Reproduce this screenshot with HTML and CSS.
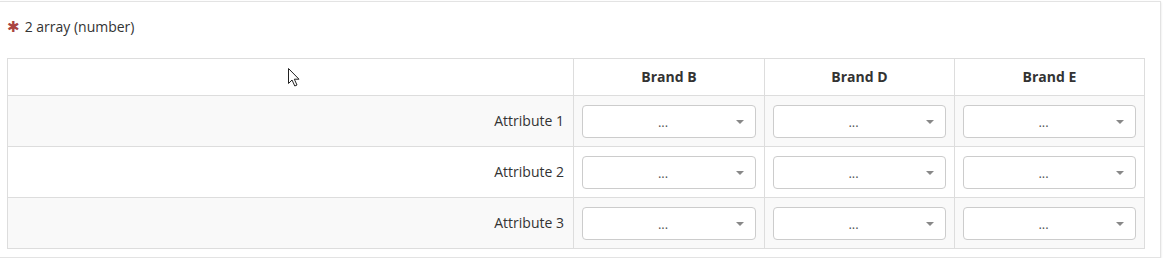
FILE: index.html
```html
<!DOCTYPE html>
<html>
<head>
<meta charset="utf-8">
<link rel="stylesheet" href="styles.css">
</head>
<body>
<div class="card">
  <div class="question"><span class="req">✱</span> 2 array (number)</div>
  <table class="grid">
    <colgroup><col class="c0"><col class="c1"><col class="c2"><col class="c2"></colgroup>
    <thead>
      <tr><th></th><th>Brand B</th><th>Brand D</th><th>Brand E</th></tr>
    </thead>
    <tbody>
      <tr class="odd"><td class="attr">Attribute 1</td>
        <td><div class="sel"><span>...</span><i class="caret"></i></div></td>
        <td><div class="sel"><span>...</span><i class="caret"></i></div></td>
        <td><div class="sel"><span>...</span><i class="caret"></i></div></td></tr>
      <tr><td class="attr">Attribute 2</td>
        <td><div class="sel"><span>...</span><i class="caret"></i></div></td>
        <td><div class="sel"><span>...</span><i class="caret"></i></div></td>
        <td><div class="sel"><span>...</span><i class="caret"></i></div></td></tr>
      <tr class="odd"><td class="attr">Attribute 3</td>
        <td><div class="sel"><span>...</span><i class="caret"></i></div></td>
        <td><div class="sel"><span>...</span><i class="caret"></i></div></td>
        <td><div class="sel"><span>...</span><i class="caret"></i></div></td></tr>
    </tbody>
  </table>
  <svg class="cursor" width="14" height="20" viewBox="0 0 14 20"><path d="M0.5 0.5 L0.5 15.5 L4 12 L6.8 18 L9 17 L6.3 11.2 L11 11.2 Z" fill="#fff" stroke="#222" stroke-width="1"/></svg>
</div>
</body>
</html>
```
FILE: styles.css
```css
html, body { margin: 0; padding: 0; background: #fff; }
body { font-family: "Open Sans", "Liberation Sans", sans-serif; font-size: 14px; color: #333; }
.card {
  position: relative;
  margin-top: 1px;
  width: 1161px;
  height: 257px;
  border: 1px solid #e3e3e3;
  border-left: none;
  box-shadow: 0 1px 2px rgba(0,0,0,0.12);
  padding: 0 0 0 7px;
  box-sizing: border-box;
}
.question { height: 56px; line-height: 48px; padding-left: 0; }
.req { color: #a94442; font-size: 15px; margin-right: 1px; }
.grid { border-collapse: collapse; width: 1137px; table-layout: fixed; }
.c0 { width: 566px; }
.c1 { width: 191px; }
.c2 { width: 190px; }
.grid th, .grid td { border: 1px solid #ddd; }
.grid th { height: 34px; font-weight: bold; text-align: center; background: #fff; padding: 0 0 2px; }
.grid td { height: 50px; padding: 0 8px; background: #fff; }
.grid tr.odd td { background: #f9f9f9; }
.grid td.attr { text-align: right; padding: 0 9px 2px 8px; height: 48px; }
.sel {
  position: relative;
  height: 33px;
  box-sizing: border-box;
  border: 1px solid #ccc;
  border-radius: 4px;
  background: #fff;
  text-align: center;
  line-height: 33px;
  color: #555;
  font-size: 13px;
}
.sel span { display: inline-block; margin-left: -12px; }
.caret {
  position: absolute;
  right: 11px;
  top: 14px;
  width: 0; height: 0;
  border-left: 4px solid transparent;
  border-right: 4px solid transparent;
  border-top: 4px solid #888;
}
.cursor { position: absolute; left: 288px; top: 66px; }
```
